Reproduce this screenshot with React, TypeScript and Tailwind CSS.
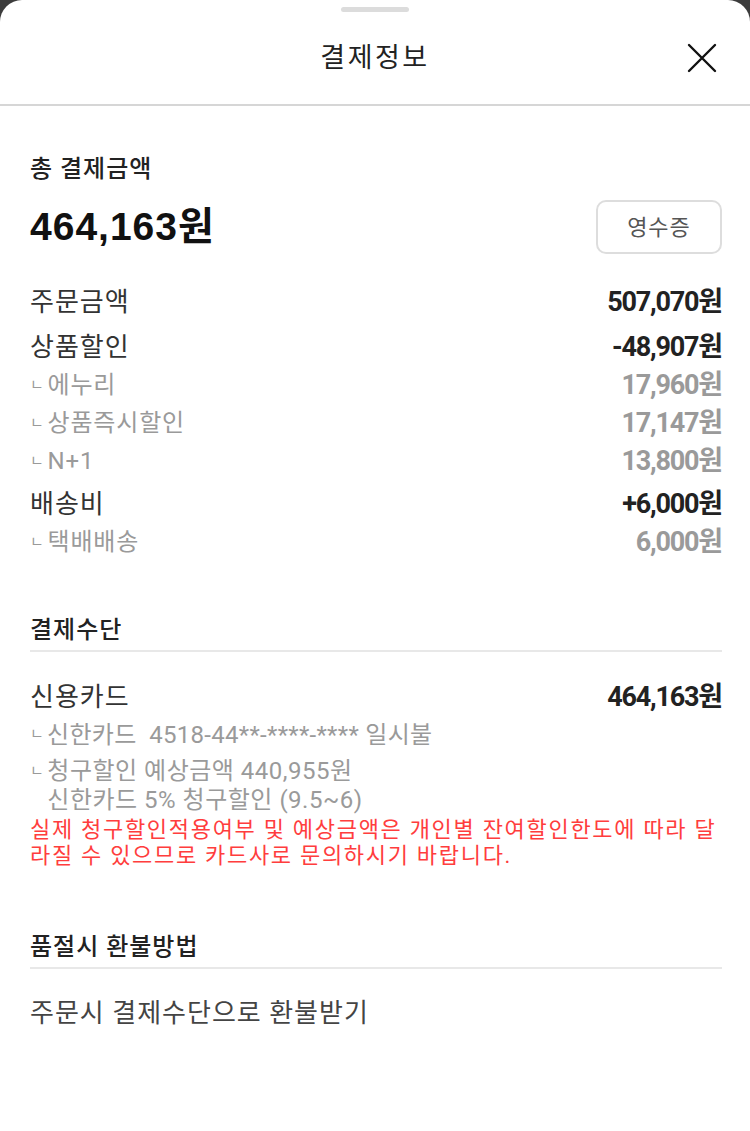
import React from "react";

const font = { fontFamily: 'Roboto, "Noto Sans CJK KR", sans-serif' };

function Row({ label, value, sub = false, className = "" }: { label: string; value: string; sub?: boolean; className?: string }) {
  return (
    <div className={`flex h-[38px] items-center justify-between ${className}`}>
      {sub ? (
        <div className="flex items-center text-[24px] tracking-[0.8px] text-[#9a9a9a]">
          <span className="mr-[3px] text-[15px]">ㄴ</span>
          <span>{label}</span>
        </div>
      ) : (
        <div className="text-[26px] tracking-[1px] text-[#333]">{label}</div>
      )}
      <div className={`text-[27px] font-bold tracking-[-1.2px] ${sub ? "text-[#9a9a9a]" : "text-[#222]"}`}>{value}</div>
    </div>
  );
}

export default function App() {
  return (
    <div className="min-h-[1131px] bg-[#3c3c3c]" style={font}>
      <div className="min-h-[1131px] rounded-t-[22px] bg-white">
        <div className="border-b-[2px] border-[#d6d6d6]">
          <div className="flex justify-center pt-[7px]">
            <div className="h-[5px] w-[68px] rounded-full bg-[#dcdcdc]" />
          </div>
          <div className="relative flex h-[92px] items-center justify-center">
            <div className="text-[27px] tracking-[2.5px] text-[#222]">결제정보</div>
            <svg className="absolute right-[33px] top-[31px]" width="30" height="30" viewBox="0 0 30 30">
              <path d="M2 2 L28 28 M28 2 L2 28" stroke="#111" strokeWidth="2.4" strokeLinecap="round" />
            </svg>
          </div>
        </div>

        <div className="pl-[30px] pr-[28px]">
          <div className="mt-[48px] flex h-[30px] items-center text-[24px] font-medium tracking-[1px] text-[#222]">총 결제금액</div>
          <div className="mt-[16px] flex h-[54px] items-center justify-between">
            <div className="text-[39px] font-bold tracking-[1px] text-[#111]" style={{ fontFamily: '"Liberation Sans", "Noto Sans CJK KR", sans-serif' }}>464,163원</div>
            <button className="flex h-[54px] w-[126px] items-center justify-center rounded-[10px] border-[2px] border-[#dddddd] text-[22px] tracking-[1px] text-[#555]">영수증</button>
          </div>

          <div className="mt-[29px]">
            <Row label="주문금액" value="507,070원" />
            <Row label="상품할인" value="-48,907원" className="mt-[7px]" />
            <Row label="에누리" value="17,960원" sub />
            <Row label="상품즉시할인" value="17,147원" sub />
            <Row label="N+1" value="13,800원" sub />
            <Row label="배송비" value="+6,000원" className="mt-[5px]" />
            <Row label="택배배송" value="6,000원" sub />
          </div>

          <div className="mt-[53px] flex h-[38px] items-center border-b-[2px] border-[#e8e8e8] pb-[4px] text-[24px] font-medium tracking-[1px] text-[#222]">결제수단</div>
          <Row label="신용카드" value="464,163원" className="mt-[26px]" />
          <div className="flex h-[37px] items-center text-[24px] tracking-[0.3px] text-[#9a9a9a]">
            <span className="mr-[3px] text-[15px]">ㄴ</span>
            <span>신한카드&nbsp;&nbsp;4518-44**-****-**** 일시불</span>
          </div>
          <div className="mt-[4px] flex text-[24px] leading-[29px] tracking-[0.5px] text-[#9a9a9a]">
            <span className="mr-[3px] text-[15px]">ㄴ</span>
            <div>
              <div>청구할인 예상금액 440,955원</div>
              <div>신한카드 5% 청구할인 (9.5~6)</div>
            </div>
          </div>
          <div className="mt-[2px] text-[22px] leading-[26px] tracking-[1.7px] text-[#ff3d3d]">
            실제 청구할인적용여부 및 예상금액은 개인별 잔여할인한도에 따라 달라질 수 있으므로 카드사로 문의하시기 바랍니다.
          </div>

          <div className="mt-[62px] flex h-[38px] items-center border-b-[2px] border-[#e8e8e8] pb-[5px] text-[24px] font-medium tracking-[1px] text-[#222]">품절시 환불방법</div>
          <div className="mt-[25px] flex h-[38px] items-center text-[26px] tracking-[1px] text-[#444]">주문시 결제수단으로 환불받기</div>
        </div>
      </div>
    </div>
  );
}
